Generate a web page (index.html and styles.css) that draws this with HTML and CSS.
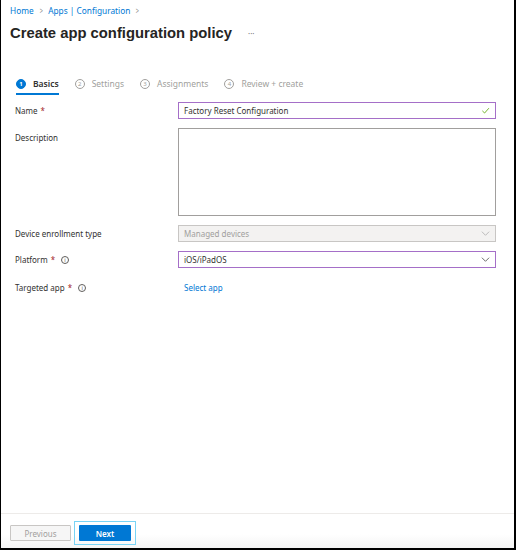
FILE: index.html
```html
<!DOCTYPE html>
<html lang="en">
<head>
<meta charset="utf-8">
<title>Create app configuration policy</title>
<link rel="stylesheet" href="styles.css">
</head>
<body>
<div class="frame">
  <header class="header">
    <nav class="crumbs">
      <a class="crumb">Home</a>
      <span class="sep">&gt;</span>
      <a class="crumb">Apps | Configuration</a>
      <span class="sep">&gt;</span>
    </nav>
    <div class="title-row">
      <h1 class="title">Create app configuration policy</h1>
      <span class="more">···</span>
    </div>
  </header>

  <div class="tabs">
    <div class="tab active"><span class="num">1</span><span class="tab-label">Basics</span></div>
    <div class="tab"><span class="num">2</span><span class="tab-label">Settings</span></div>
    <div class="tab"><span class="num">3</span><span class="tab-label">Assignments</span></div>
    <div class="tab"><span class="num">4</span><span class="tab-label">Review + create</span></div>
  </div>

  <main class="form">
    <label class="label">Name <span class="req">*</span></label>
    <div class="field focus">
      <span class="value">Factory Reset Configuration</span>
      <svg class="icon" viewBox="0 0 10 10" width="9" height="9"><path d="M1.5 5.4 L4 7.8 L8.8 2.4" fill="none" stroke="#57a300" stroke-width="0.9"/></svg>
    </div>

    <label class="label top">Description</label>
    <div class="field area"></div>

    <label class="label">Device enrollment type</label>
    <div class="field disabled">
      <span class="value">Managed devices</span>
      <svg class="icon" viewBox="0 0 10 10" width="9" height="9"><path d="M1 3 L5 7 L9 3" fill="none" stroke="#a6a6a6" stroke-width="0.8"/></svg>
    </div>

    <label class="label">Platform <span class="req">*</span> <span class="info">i</span></label>
    <div class="field focus">
      <span class="value">iOS/iPadOS</span>
      <svg class="icon" viewBox="0 0 10 10" width="9" height="9"><path d="M1 3 L5 7 L9 3" fill="none" stroke="#333" stroke-width="0.8"/></svg>
    </div>

    <label class="label">Targeted app <span class="req">*</span> <span class="info">i</span></label>
    <div class="link-cell"><a class="link">Select app</a></div>
  </main>

  <footer class="footer">
    <button class="btn prev">Previous</button>
    <span class="focus-ring"><button class="btn next">Next</button></span>
  </footer>
</div>
</body>
</html>
```

FILE: styles.css
```css
* { box-sizing: border-box; }
html, body { margin: 0; padding: 0; background: #fff; }
body { font-family: "Noto Sans", "Open Sans", sans-serif; color: #323130; }

.frame {
  width: 516px;
  height: 550px;
  border-left: 1px solid #000;
  border-right: 2px solid #000;
  border-bottom: 2px solid #000;
  display: flex;
  flex-direction: column;
  background: #fff;
}

.header { padding: 5px 0 0 9px; }
.crumbs { display: flex; align-items: center; gap: 5px; font-size: 8.3px; line-height: 12px; }
.crumb { color: #0078d4; }
.sep { color: #8a8886; font-size: 8px; transform: scaleX(0.7); }

.title-row { display: flex; align-items: center; margin-top: 6px; }
.title {
  margin: 0;
  font-family: "Liberation Sans", Arial, sans-serif;
  font-size: 14.8px;
  font-weight: bold;
  color: #252423;
  line-height: 20px;
}
.more { margin-left: 16px; font-size: 8px; color: #777; }

.tabs { display: flex; gap: 16px; margin: 33px 0 0 15px; }
.tab {
  display: flex;
  align-items: center;
  gap: 7px;
  font-size: 8.5px;
  color: #a19f9d;
  height: 19px;
  padding-bottom: 2px;
  border-bottom: 2px solid transparent;
}
.tab.active { color: #323130; border-bottom-color: #0078d4; font-weight: 600; }
.num {
  width: 10px; height: 10px;
  border-radius: 50%;
  border: 1px solid #a19f9d;
  font-size: 6px;
  display: flex; align-items: center; justify-content: center;
  font-weight: normal;
}
.tab.active .num { background: #0078d4; border-color: #0078d4; color: #fff; font-weight: bold; }

.form {
  flex: 1;
  display: grid;
  grid-template-columns: 163px 318px;
  grid-auto-rows: min-content;
  row-gap: 9px;
  padding: 7px 0 0 14px;
  align-content: start;
}
.label { font-size: 8px; color: #323130; align-self: center; display: flex; align-items: center; gap: 3px; }
.label.top { align-self: start; padding-top: 4px; }
.req { color: #a4262c; }
.info {
  width: 8px; height: 8px;
  border: 0.8px solid #605e5c;
  border-radius: 50%;
  font-size: 5.5px;
  color: #605e5c;
  display: inline-flex; align-items: center; justify-content: center;
  margin-left: 3px;
}

.field {
  height: 17px;
  border: 1px solid #8a8886;
  display: flex;
  align-items: center;
  justify-content: space-between;
  padding: 0 5px 0 5px;
  font-size: 8px;
  color: #323130;
}
.field.focus { border-color: #a56fc8; }
.field.area { height: 88px; border-color: #a19f9d; }
.field.disabled { background: #f3f2f1; border-color: #c8c6c4; color: #a19f9d; }
.icon { display: block; }

.link-cell { height: 21px; display: flex; align-items: center; padding-left: 6px; }
.link { color: #0078d4; font-size: 8px; }

.footer {
  border-top: 1px solid #edebe9;
  height: 35px;
  display: flex;
  align-items: center;
  gap: 3px;
  padding: 4px 0 0 9px;
  background: linear-gradient(#fff 60%, #f4f4f4);
}
.btn {
  font-family: "Noto Sans", "Open Sans", sans-serif;
  font-size: 8px;
  height: 16px;
  padding: 0;
  border-radius: 1px;
}
.prev { width: 61px; border: 1px solid #c8c6c4; background: #f6f6f6; color: #a19f9d; }
.focus-ring { border: 1px solid #7ad4f5; padding: 3px 4px; display: flex; }
.next { width: 52px; border: 0; background: #0078d4; color: #fff; font-weight: 600; }
```
